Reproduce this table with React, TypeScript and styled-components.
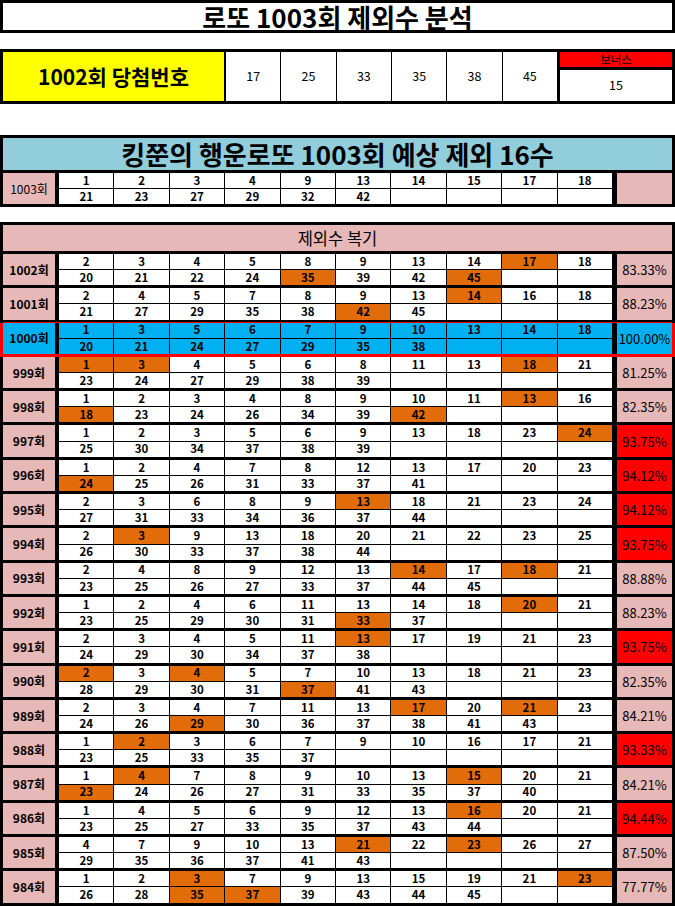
import React from "react";
import styled, { createGlobalStyle } from "styled-components";

const PINK = "#E6B8B7";
const ORANGE = "#E26B0A";
const CYAN = "#00B0F0";
const RED = "#FF0000";
const SKY = "#92CDDC";
const YELLOW = "#FFFF00";

const GlobalStyle = createGlobalStyle`
  *, *::before, *::after { box-sizing: border-box; }
  html, body { margin: 0; padding: 0; background: #fff; }
  body {
    font-family: "Noto Sans CJK KR", "Noto Sans", sans-serif;
    color: #000;
  }
`;

const Page = styled.div`
  width: 675px;
  display: flex;
  flex-direction: column;
`;

const TitleBox = styled.div`
  height: 33px;
  border: 3px solid #000;
  background: #fff;
  display: flex;
  align-items: center;
  justify-content: center;
  font-size: 26px;
  font-weight: 700;
  line-height: 27px;
`;

const WinBox = styled.div`
  margin-top: 16px;
  background: #000;
  padding: 3px;
  height: 55px;
  display: flex;
`;

const WinLabel = styled.div`
  width: 221px;
  background: ${YELLOW};
  display: flex;
  align-items: center;
  justify-content: center;
  font-size: 21px;
  font-weight: 700;
  line-height: 1;
`;

const WinNums = styled.div`
  margin-left: 2px;
  width: 331px;
  display: grid;
  grid-template-columns: repeat(6, 1fr);
  column-gap: 1px;
`;

const WinNum = styled.div`
  background: #fff;
  display: flex;
  align-items: center;
  justify-content: center;
  font-size: 12.5px;
  line-height: 1;
`;

const Bonus = styled.div`
  margin-left: 3px;
  width: 112px;
  display: flex;
  flex-direction: column;
`;

const BonusHead = styled.div`
  height: 15px;
  background: ${RED};
  display: flex;
  align-items: center;
  justify-content: center;
  font-size: 11.5px;
  line-height: 1;
`;

const BonusValue = styled.div`
  margin-top: 3px;
  flex: 1;
  background: #fff;
  display: flex;
  align-items: center;
  justify-content: center;
  font-size: 12.5px;
  line-height: 1;
`;

const PredBox = styled.div`
  margin-top: 31px;
  background: #000;
  padding: 3px;
  display: flex;
  flex-direction: column;
`;

const PredHead = styled.div`
  height: 32px;
  margin-bottom: 3px;
  background: ${SKY};
  display: flex;
  align-items: center;
  justify-content: center;
  font-size: 26px;
  font-weight: 700;
  line-height: 1;
`;

const ReviewBox = styled.div`
  margin-top: 15px;
  background: #000;
  padding: 3px 3px 0;
  display: flex;
  flex-direction: column;
`;

const ReviewHead = styled.div`
  height: 26px;
  background: ${PINK};
  display: flex;
  align-items: center;
  justify-content: center;
  font-size: 16.5px;
  line-height: 1;
`;

const ReviewBody = styled.div`
  margin-top: 3px;
  padding-bottom: 3px;
  display: grid;
  grid-auto-rows: 31.3px;
  row-gap: 3px;
`;

const Block = styled.div<{ $hot?: boolean; $h?: number }>`
  display: flex;
  height: ${(p) => (p.$h ? `${p.$h}px` : "100%")};
  box-shadow: ${(p) =>
    p.$hot
      ? `-3px 0 0 ${RED}, 3px 0 0 ${RED}, 0 -1px 0 ${RED}, 0 3px 0 ${RED}, -3px 3px 0 ${RED}, 3px 3px 0 ${RED}`
      : "none"};
`;

const Label = styled.div<{ $bg: string; $bold?: boolean }>`
  width: 52px;
  background: ${(p) => p.$bg};
  display: flex;
  align-items: center;
  justify-content: center;
  font-size: 12px;
  font-weight: ${(p) => (p.$bold ? 700 : 400)};
  line-height: 1;
`;

const Nums = styled.div`
  margin-left: 4px;
  flex: 1;
  display: grid;
  grid-template-columns: repeat(10, 1fr);
  grid-template-rows: 1fr 1fr;
  gap: 1px;
  background: #000;
`;

const Num = styled.div<{ $bg: string }>`
  background: ${(p) => p.$bg};
  display: flex;
  align-items: center;
  justify-content: center;
  font-size: 11.5px;
  font-weight: 700;
  line-height: 1;
`;

const Pct = styled.div<{ $bg: string }>`
  margin-left: 5px;
  width: 55px;
  background: ${(p) => p.$bg};
  display: flex;
  align-items: center;
  justify-content: center;
  font-size: 13px;
  line-height: 1;
`;

type Level = "pink" | "red" | "blue";
type Row = { round: number; nums: number[]; hits: number[]; pct: string; level: Level };

const rows: Row[] = [
  { round: 1002, nums: [2, 3, 4, 5, 8, 9, 13, 14, 17, 18, 20, 21, 22, 24, 35, 39, 42, 45], hits: [17, 35, 45], pct: "83.33%", level: "pink" },
  { round: 1001, nums: [2, 4, 5, 7, 8, 9, 13, 14, 16, 18, 21, 27, 29, 35, 38, 42, 45], hits: [14, 42], pct: "88.23%", level: "pink" },
  { round: 1000, nums: [1, 3, 5, 6, 7, 9, 10, 13, 14, 18, 20, 21, 24, 27, 29, 35, 38], hits: [], pct: "100.00%", level: "blue" },
  { round: 999, nums: [1, 3, 4, 5, 6, 8, 11, 13, 18, 21, 23, 24, 27, 29, 38, 39], hits: [1, 3, 18], pct: "81.25%", level: "pink" },
  { round: 998, nums: [1, 2, 3, 4, 8, 9, 10, 11, 13, 16, 18, 23, 24, 26, 34, 39, 42], hits: [13, 18, 42], pct: "82.35%", level: "pink" },
  { round: 997, nums: [1, 2, 3, 5, 6, 9, 13, 18, 23, 24, 25, 30, 34, 37, 38, 39], hits: [24], pct: "93.75%", level: "red" },
  { round: 996, nums: [1, 2, 4, 7, 8, 12, 13, 17, 20, 23, 24, 25, 26, 31, 33, 37, 41], hits: [24], pct: "94.12%", level: "red" },
  { round: 995, nums: [2, 3, 6, 8, 9, 13, 18, 21, 23, 24, 27, 31, 33, 34, 36, 37, 44], hits: [13], pct: "94.12%", level: "red" },
  { round: 994, nums: [2, 3, 9, 13, 18, 20, 21, 22, 23, 25, 26, 30, 33, 37, 38, 44], hits: [3], pct: "93.75%", level: "red" },
  { round: 993, nums: [2, 4, 8, 9, 12, 13, 14, 17, 18, 21, 23, 25, 26, 27, 33, 37, 44, 45], hits: [14, 18], pct: "88.88%", level: "pink" },
  { round: 992, nums: [1, 2, 4, 6, 11, 13, 14, 18, 20, 21, 23, 25, 29, 30, 31, 33, 37], hits: [20, 33], pct: "88.23%", level: "pink" },
  { round: 991, nums: [2, 3, 4, 5, 11, 13, 17, 19, 21, 23, 24, 29, 30, 34, 37, 38], hits: [13], pct: "93.75%", level: "red" },
  { round: 990, nums: [2, 3, 4, 5, 7, 10, 13, 18, 21, 23, 28, 29, 30, 31, 37, 41, 43], hits: [2, 4, 37], pct: "82.35%", level: "pink" },
  { round: 989, nums: [2, 3, 4, 7, 11, 13, 17, 20, 21, 23, 24, 26, 29, 30, 36, 37, 38, 41, 43], hits: [17, 21, 29], pct: "84.21%", level: "pink" },
  { round: 988, nums: [1, 2, 3, 6, 7, 9, 10, 16, 17, 21, 23, 25, 33, 35, 37], hits: [2], pct: "93.33%", level: "red" },
  { round: 987, nums: [1, 4, 7, 8, 9, 10, 13, 15, 20, 21, 23, 24, 26, 27, 31, 33, 35, 37, 40], hits: [4, 15, 23], pct: "84.21%", level: "pink" },
  { round: 986, nums: [1, 4, 5, 6, 9, 12, 13, 16, 20, 21, 23, 25, 27, 33, 35, 37, 43, 44], hits: [16], pct: "94.44%", level: "red" },
  { round: 985, nums: [4, 7, 9, 10, 13, 21, 22, 23, 26, 27, 29, 35, 36, 37, 41, 43], hits: [21, 23], pct: "87.50%", level: "pink" },
  { round: 984, nums: [1, 2, 3, 7, 9, 13, 15, 19, 21, 23, 26, 28, 35, 37, 39, 43, 44, 45], hits: [3, 23, 35, 37], pct: "77.77%", level: "pink" },
];

const levelBg: Record<Level, string> = { pink: PINK, red: RED, blue: CYAN };

const winning = [17, 25, 33, 35, 38, 45];
const prediction = [1, 2, 3, 4, 9, 13, 14, 15, 17, 18, 21, 23, 27, 29, 32, 42];

const cells = (nums: number[]) => Array.from({ length: 20 }, (_, i) => nums[i]);

export default function App() {
  return (
    <>
      <GlobalStyle />
      <Page>
        <TitleBox>로또 1003회 제외수 분석</TitleBox>

        <WinBox>
          <WinLabel>1002회 당첨번호</WinLabel>
          <WinNums>
            {winning.map((n) => (
              <WinNum key={n}>{n}</WinNum>
            ))}
          </WinNums>
          <Bonus>
            <BonusHead>보너스</BonusHead>
            <BonusValue>15</BonusValue>
          </Bonus>
        </WinBox>

        <PredBox>
          <PredHead>킹쭌의 행운로또 1003회 예상 제외 16수</PredHead>
          <Block $h={31}>
            <Label $bg={PINK}>1003회</Label>
            <Nums>
              {cells(prediction).map((n, i) => (
                <Num key={i} $bg="#fff">
                  {n ?? ""}
                </Num>
              ))}
            </Nums>
            <Pct $bg={PINK} />
          </Block>
        </PredBox>

        <ReviewBox>
          <ReviewHead>제외수 복기</ReviewHead>
          <ReviewBody>
            {rows.map((r) => {
              const hot = r.level === "blue";
              const base = hot ? CYAN : "#fff";
              return (
                <Block key={r.round} $hot={hot}>
                  <Label $bg={hot ? CYAN : PINK} $bold>
                    {r.round}회
                  </Label>
                  <Nums>
                    {cells(r.nums).map((n, i) => (
                      <Num key={i} $bg={n !== undefined && r.hits.includes(n) ? ORANGE : base}>
                        {n ?? ""}
                      </Num>
                    ))}
                  </Nums>
                  <Pct $bg={levelBg[r.level]}>{r.pct}</Pct>
                </Block>
              );
            })}
          </ReviewBody>
        </ReviewBox>
      </Page>
    </>
  );
}
